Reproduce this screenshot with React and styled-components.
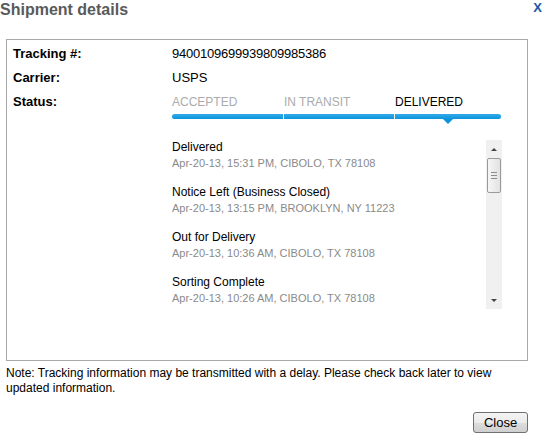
import React from "react";
import styled, { createGlobalStyle } from "styled-components";

const Global = createGlobalStyle`
  html, body { margin: 0; padding: 0; background: #fff; }
  body { font-family: "Liberation Sans", Arial, sans-serif; color: #000; }
`;

const Dialog = styled.div`
  width: 552px;
  height: 439px;
  display: flex;
  flex-direction: column;
  overflow: hidden;
`;

const Header = styled.div`
  display: flex;
  justify-content: space-between;
  align-items: flex-start;
  height: 39px;
  padding-right: 10px;
`;

const Title = styled.h1`
  margin: 0;
  font-size: 16px;
  line-height: 20px;
  font-weight: bold;
  color: #5a5a5a;
`;

const CloseX = styled.span`
  font-size: 13px;
  line-height: 15px;
  font-weight: bold;
  color: #1c57a6;
  cursor: pointer;
`;

const Box = styled.div`
  margin: 0 24px 0 6px;
  height: 322px;
  box-sizing: border-box;
  border: 1px solid #a8a8a8;
  padding: 2px 6px 0 6px;
`;

const InfoGrid = styled.div`
  display: grid;
  grid-template-columns: 159px 1fr;
  align-items: start;
`;

const Label = styled.div`
  font-size: 13px;
  line-height: 24px;
  font-weight: bold;
`;

const Value = styled.div`
  font-size: 13px;
  line-height: 24px;
  letter-spacing: ${(p) => (p.$digits ? "-0.23px" : "0")};
`;

const Stepper = styled.div`
  display: grid;
  grid-template-columns: 111px 110px 106px;
  column-gap: 1px;
  width: 329px;
  padding-top: 2px;
`;

const Step = styled.div`
  display: flex;
  flex-direction: column;
  position: relative;
`;

const StepLabel = styled.div`
  font-size: 12px;
  line-height: 20px;
  color: ${(p) => (p.$active ? "#000" : "#ababab")};
  padding-bottom: 2px;
`;

const Segment = styled.div`
  height: 5px;
  background: linear-gradient(#35abe9, #0b94dc);
  border-radius: ${(p) =>
    p.$first ? "3px 0 0 3px" : p.$last ? "0 3px 3px 0" : "0"};
`;

const Pointer = styled.div`
  position: absolute;
  left: 50%;
  bottom: -5px;
  margin-left: -5px;
  width: 0;
  height: 0;
  border-left: 5px solid transparent;
  border-right: 5px solid transparent;
  border-top: 5px solid #0b94dc;
`;

const Events = styled.div`
  grid-column: 2;
  margin-top: 21px;
  width: 330px;
  height: 169px;
  display: flex;
`;

const EventList = styled.div`
  flex: 1;
  overflow: hidden;
  display: flex;
  flex-direction: column;
  gap: 14px;
`;

const EventItem = styled.div`
  display: flex;
  flex-direction: column;
`;

const EventTitle = styled.div`
  font-size: 12px;
  line-height: 15px;
  color: #000;
`;

const EventMeta = styled.div`
  font-size: 11px;
  line-height: 16px;
  color: #8a8a8a;
`;

const ScrollTrack = styled.div`
  width: 16px;
  background: #f0f0f0;
  display: flex;
  flex-direction: column;
  align-items: center;
`;

const ScrollButton = styled.div`
  height: 18px;
  width: 16px;
  display: flex;
  align-items: center;
  justify-content: center;
`;

const Arrow = styled.div`
  width: 0;
  height: 0;
  border-left: 3px solid transparent;
  border-right: 3px solid transparent;
  ${(p) =>
    p.$down
      ? "border-top: 3px solid #444;"
      : "border-bottom: 3px solid #444;"}
`;

const Thumb = styled.div`
  width: 14px;
  height: 35px;
  box-sizing: border-box;
  border: 1px solid #9a9a9a;
  border-radius: 2px;
  background: linear-gradient(to right, #f6f6f6, #e2e2e2);
  display: flex;
  flex-direction: column;
  align-items: center;
  justify-content: center;
  gap: 2px;
`;

const Grip = styled.div`
  width: 6px;
  height: 1px;
  background: #8c8c8c;
`;

const Spacer = styled.div`
  flex: 1;
`;

const Note = styled.p`
  margin: 5px 24px 0 6px;
  font-size: 12px;
  line-height: 15px;
`;

const Footer = styled.div`
  display: flex;
  justify-content: flex-end;
  padding: 16px 24px 0 0;
`;

const Button = styled.button`
  width: 55px;
  height: 21px;
  padding: 0;
  font-family: "Liberation Sans", Arial, sans-serif;
  font-size: 13px;
  color: #000;
  border: 1px solid #707070;
  border-radius: 3px;
  background: linear-gradient(#f4f4f4 0%, #ebebeb 50%, #dddddd 51%, #cfcfcf 100%);
`;

const steps = ["ACCEPTED", "IN TRANSIT", "DELIVERED"];

const events = [
  { title: "Delivered", meta: "Apr-20-13, 15:31 PM, CIBOLO, TX 78108" },
  {
    title: "Notice Left (Business Closed)",
    meta: "Apr-20-13, 13:15 PM, BROOKLYN, NY 11223",
  },
  { title: "Out for Delivery", meta: "Apr-20-13, 10:36 AM, CIBOLO, TX 78108" },
  { title: "Sorting Complete", meta: "Apr-20-13, 10:26 AM, CIBOLO, TX 78108" },
];

export default function App() {
  return (
    <>
      <Global />
      <Dialog>
        <Header>
          <Title>Shipment details</Title>
          <CloseX>X</CloseX>
        </Header>
        <Box>
          <InfoGrid>
            <Label>Tracking #:</Label>
            <Value $digits>9400109699939809985386</Value>
            <Label>Carrier:</Label>
            <Value>USPS</Value>
            <Label>Status:</Label>
            <Stepper>
              {steps.map((s, i) => (
                <Step key={s}>
                  <StepLabel $active={i === steps.length - 1}>{s}</StepLabel>
                  <Segment $first={i === 0} $last={i === steps.length - 1} />
                  {i === steps.length - 1 && <Pointer />}
                </Step>
              ))}
            </Stepper>
            <Events>
              <EventList>
                {events.map((e) => (
                  <EventItem key={e.title}>
                    <EventTitle>{e.title}</EventTitle>
                    <EventMeta>{e.meta}</EventMeta>
                  </EventItem>
                ))}
              </EventList>
              <ScrollTrack>
                <ScrollButton>
                  <Arrow />
                </ScrollButton>
                <Thumb>
                  <Grip />
                  <Grip />
                  <Grip />
                </Thumb>
                <Spacer />
                <ScrollButton>
                  <Arrow $down />
                </ScrollButton>
              </ScrollTrack>
            </Events>
          </InfoGrid>
        </Box>
        <Note>
          Note: Tracking information may be transmitted with a delay. Please
          check back later to view updated information.
        </Note>
        <Footer>
          <Button>Close</Button>
        </Footer>
      </Dialog>
    </>
  );
}
